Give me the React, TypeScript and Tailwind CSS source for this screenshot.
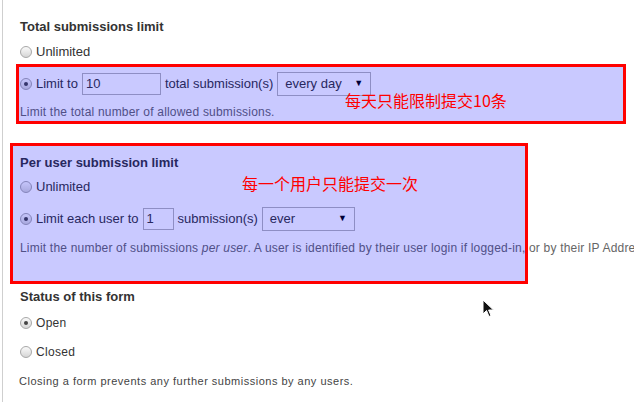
import type React from "react"

function Radio({ checked = false }: { checked?: boolean }) {
  return (
    <span className="relative mr-[4px] flex h-[12px] w-[12px] shrink-0 items-center justify-center rounded-full border border-[#a8a8a8] bg-gradient-to-b from-[#fafafa] to-[#d6d6d6]">
      {checked && <span className="h-[4px] w-[4px] rounded-full bg-[#444]" />}
    </span>
  )
}

function Select({ value, width }: { value: string; width: string }) {
  return (
    <div className={`flex h-[24px] items-center justify-between border border-[#b4b4b4] bg-white pl-[7px] pr-[7px] ${width}`}>
      <span>{value}</span>
      <span className="text-[9px] text-black">▼</span>
    </div>
  )
}

function Cursor(props: React.SVGProps<SVGSVGElement>) {
  return (
    <svg {...props} width="14" height="20" viewBox="0 0 14 20">
      <path d="M1 1 L1 15 L4.5 11.5 L7 17.5 L9 16.6 L6.6 11 L11.5 11 Z" fill="#111" stroke="#fff" strokeWidth="1" />
    </svg>
  )
}

export default function App() {
  return (
    <div className="relative h-[402px] w-[634px] overflow-hidden bg-white font-['Liberation_Sans',Arial,sans-serif] text-[13px] text-[#333]">
      <div className="ml-[2px] h-full border-l border-[#cfcfcf] pl-[17px] pt-[19px]">
        {/* total */}
        <div className="flex h-4 items-center font-bold">Total submissions limit</div>
        <div className="mt-[7px] flex h-5 items-center">
          <Radio />
          Unlimited
        </div>
        <div className="mt-[10px] flex h-6 items-center">
          <Radio checked />
          <span>Limit to</span>
          <div className="ml-[4px] flex h-[22px] w-[79px] items-center border border-[#b4b4b4] bg-white pl-[3px]">10</div>
          <span className="ml-[4px]">total submission(s)</span>
          <Select value="every day" width="ml-[4px] w-[94px]" />
        </div>
        <div className="mt-[8px] flex h-4 items-center text-[12px] tracking-[0.2px] text-[#666]">
          Limit the total number of allowed submissions.
        </div>

        {/* per user */}
        <div className="mt-[35px] flex h-4 items-center font-bold">Per user submission limit</div>
        <div className="mt-[6px] flex h-5 items-center">
          <Radio />
          Unlimited
        </div>
        <div className="mt-[10px] flex h-6 items-center">
          <Radio checked />
          <span>Limit each user to</span>
          <div className="ml-[4px] flex h-[22px] w-[31px] items-center border border-[#b4b4b4] bg-white pl-[3px]">1</div>
          <span className="ml-[4px]">submission(s)</span>
          <Select value="ever" width="ml-[4px] w-[93px]" />
        </div>
        <div className="mt-[9px] flex h-4 items-center whitespace-nowrap text-[12px] tracking-[0.2px] text-[#666]">
          Limit the number of submissions&nbsp;<i>per user</i>. A user is identified by their user login if logged-in, or by their IP Address.
        </div>

        {/* status */}
        <div className="mt-[33px] flex h-4 items-center font-bold">Status of this form</div>
        <div className="mt-[8px] flex h-5 items-center text-[12px] tracking-[0.3px]">
          <Radio checked />
          Open
        </div>
        <div className="mt-[9px] flex h-5 items-center text-[12px] tracking-[0.3px]">
          <Radio />
          Closed
        </div>
        <div className="-ml-[1px] mt-[11px] flex h-4 items-center text-[11px] tracking-[0.5px] text-[#444]">
          Closing a form prevents any further submissions by any users.
        </div>
      </div>

      {/* annotations */}
      <div className="absolute left-[16px] top-[64px] h-[60px] w-[610px] border-[3px] border-[#ff0000] bg-[rgba(0,0,255,0.21)]" />
      <div className="absolute left-[10px] top-[143px] h-[141px] w-[518px] border-[3px] border-[#ff0000] bg-[rgba(0,0,255,0.21)]" />
      <div className="absolute left-[345px] top-[89px] font-['Noto_Sans_CJK_SC',sans-serif] text-[16px] leading-[22px] text-[#ff0000]">
        每天只能限制提交10条
      </div>
      <div className="absolute left-[242px] top-[172px] font-['Noto_Sans_CJK_SC',sans-serif] text-[16px] leading-[22px] text-[#ff0000]">
        每一个用户只能提交一次
      </div>
      <Cursor className="absolute left-[482px] top-[299px]" />
    </div>
  )
}
